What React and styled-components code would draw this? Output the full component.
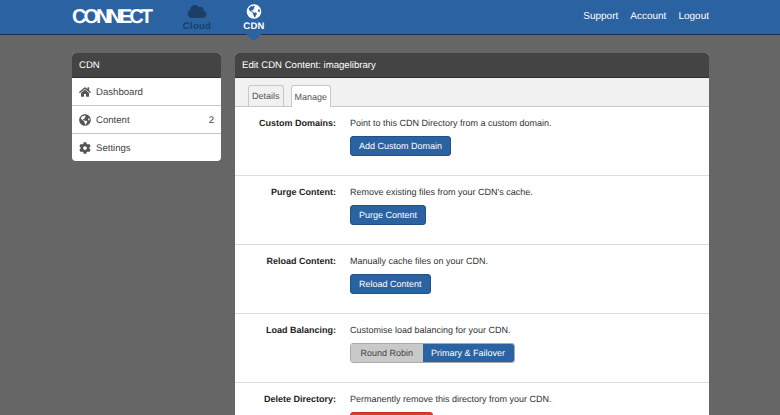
import React from 'react';
import styled, { createGlobalStyle } from 'styled-components';
import { FaCloud, FaCog, FaGlobeAmericas, FaHome } from 'react-icons/fa';

const GlobalStyle = createGlobalStyle`
  html, body {
    margin: 0;
    height: 415px;
    overflow: hidden;
    background: #666;
    font-family: "Liberation Sans", Arial, sans-serif;
    font-size: 9px;
    color: #333;
    text-rendering: geometricPrecision;
  }
`;

const Header = styled.header`
  height: 34px;
  background: #2a62a2;
  border-bottom: 1px solid #14304f;
  padding: 0 71px 0 72px;
  display: flex;
  align-items: center;
`;
const Logo = styled.div`
  width: 100px;
  color: #fff;
  font-size: 20px;
  font-weight: 700;
  letter-spacing: -3px;
  line-height: 20px;
  margin-top: -1px;
`;
const AppNav = styled.nav`
  display: flex;
  gap: 29px;
  margin-left: 11px;
  flex: 1;
`;
const AppLink = styled.div`
  position: relative;
  width: 28px;
  height: 34px;
  display: flex;
  flex-direction: column;
  align-items: center;
  padding-top: 4px;
  box-sizing: border-box;
  color: ${p => (p.$active ? '#fff' : '#1b3f66')};
  font-size: 9.5px;
  font-weight: 700;
  letter-spacing: 0.3px;
  svg {
    width: 20px;
    height: 15px;
    margin-bottom: 2px;
  }
  ${p =>
    p.$active &&
    `&::after {
      content: '';
      position: absolute;
      top: 34px;
      left: 6px;
      border: 8px solid transparent;
      border-bottom: 0;
      border-top: 7px solid #2a62a2;
    }`}
`;
const UserNav = styled.nav`
  display: flex;
  gap: 12px;
  color: #fff;
  font-size: 10px;
  margin-top: -1px;
`;
const Page = styled.main`
  display: flex;
  align-items: flex-start;
  gap: 14px;
  padding: 18px 71px 0 72px;
`;
const Sidebar = styled.aside`
  width: 149px;
  flex: none;
  border-radius: 4px;
  overflow: hidden;
  background: #fff;
`;
const PanelHead = styled.div`
  height: 25px;
  background: #444;
  border-bottom: 1px solid #2f2f2f;
  box-sizing: border-box;
  padding: 0 7px;
  display: flex;
  align-items: center;
  color: #fff;
  font-size: 9.6px;
`;
const SideRow = styled.div`
  height: 28px;
  box-sizing: border-box;
  padding: 1px 7px 0;
  display: flex;
  align-items: center;
  gap: 5px;
  color: #444;
  font-size: 9.6px;
  border-bottom: 1px solid #c4c4c4;
  &:last-child {
    border-bottom: 0;
    height: 27px;
  }
  svg {
    width: 12px;
    height: 12px;
    margin-top: -1px;
    color: #555;
  }
`;
const Count = styled.span`
  margin-left: auto;
`;
const Content = styled.section`
  flex: 1;
  border-radius: 4px 4px 0 0;
  overflow: hidden;
  background: #fff;
  height: 400px;
`;
const TabBar = styled.div`
  height: 29px;
  box-sizing: border-box;
  background: #f1f1f1;
  border-bottom: 1px solid #c8c8c8;
  padding: 7px 0 0 13px;
  display: flex;
  gap: 7px;
`;
const Tab = styled.div`
  height: ${p => (p.$active ? '22px' : '21px')};
  box-sizing: border-box;
  padding: 0 3px;
  display: flex;
  align-items: center;
  border: 1px solid #c8c8c8;
  border-bottom: 0;
  border-radius: 3px 3px 0 0;
  background: ${p => (p.$active ? '#fff' : '#f1f1f1')};
  color: #555;
`;
const Section = styled.div`
  height: 69px;
  box-sizing: border-box;
  border-bottom: 1px solid #ddd;
  padding-top: 11px;
  display: grid;
  grid-template-columns: 101px 1fr;
  column-gap: 14px;
  align-content: start;
  &:last-child {
    border-bottom: 0;
  }
`;
const Label = styled.div`
  text-align: right;
  font-weight: 700;
  color: #222;
  line-height: 11px;
`;
const Body = styled.div`
  line-height: 11px;
  color: #333;
`;
const Button = styled.div`
  display: inline-flex;
  align-items: center;
  height: 20px;
  box-sizing: border-box;
  margin-top: 7px;
  padding: 0 8px;
  color: #fff;
  background: ${p => p.$bg || '#2a62a2'};
  border: 1px solid ${p => p.$border || '#215085'};
  border-radius: 3px;
`;
const Toggle = styled.div`
  display: inline-flex;
  height: 20px;
  margin-top: 7px;
  border-radius: 3px;
  overflow: hidden;
  border: 1px solid #aaa;
  box-sizing: border-box;
`;
const ToggleItem = styled.div`
  display: flex;
  align-items: center;
  padding: 0 ${p => (p.$active ? '8.5px' : '9.5px')};
  background: ${p => (p.$active ? '#2a62a2' : '#c9c9c9')};
  color: ${p => (p.$active ? '#fff' : '#444')};
`;

const rows = [
  { label: 'Custom Domains:', text: 'Point to this CDN Directory from a custom domain.', button: 'Add Custom Domain' },
  { label: 'Purge Content:', text: "Remove existing files from your CDN's cache.", button: 'Purge Content' },
  { label: 'Reload Content:', text: 'Manually cache files on your CDN.', button: 'Reload Content' }
];

export default function App() {
  return (
    <>
      <GlobalStyle />
      <Header>
        <Logo>CONNECT</Logo>
        <AppNav>
          <AppLink>
            <FaCloud />
            Cloud
          </AppLink>
          <AppLink $active>
            <FaGlobeAmericas />
            CDN
          </AppLink>
        </AppNav>
        <UserNav>
          <span>Support</span>
          <span>Account</span>
          <span>Logout</span>
        </UserNav>
      </Header>
      <Page>
        <Sidebar>
          <PanelHead>CDN</PanelHead>
          <SideRow>
            <FaHome />
            Dashboard
          </SideRow>
          <SideRow>
            <FaGlobeAmericas />
            Content
            <Count>2</Count>
          </SideRow>
          <SideRow>
            <FaCog />
            Settings
          </SideRow>
        </Sidebar>
        <Content>
          <PanelHead>Edit CDN Content: imagelibrary</PanelHead>
          <TabBar>
            <Tab>Details</Tab>
            <Tab $active>Manage</Tab>
          </TabBar>
          {rows.map(row => (
            <Section key={row.label}>
              <Label>{row.label}</Label>
              <Body>
                {row.text}
                <br />
                <Button>{row.button}</Button>
              </Body>
            </Section>
          ))}
          <Section>
            <Label>Load Balancing:</Label>
            <Body>
              Customise load balancing for your CDN.
              <br />
              <Toggle>
                <ToggleItem>Round Robin</ToggleItem>
                <ToggleItem $active>Primary &amp; Failover</ToggleItem>
              </Toggle>
            </Body>
          </Section>
          <Section>
            <Label>Delete Directory:</Label>
            <Body>
              Permanently remove this directory from your CDN.
              <br />
              <Button $bg="#d5402b" $border="#c0341f">Delete Directory</Button>
            </Body>
          </Section>
        </Content>
      </Page>
    </>
  );
}
